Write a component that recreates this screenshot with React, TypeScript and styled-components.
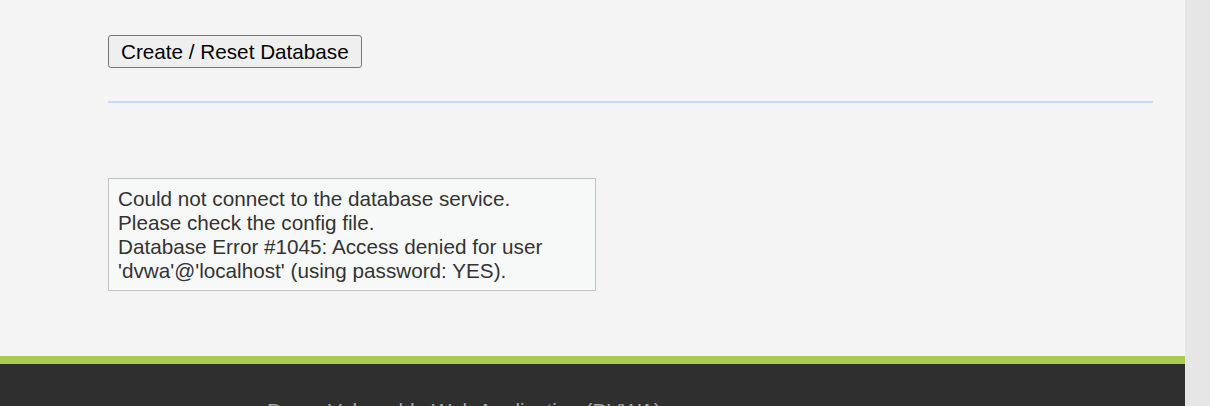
import React from "react";
import styled, { createGlobalStyle } from "styled-components";

const GlobalStyle = createGlobalStyle`
  html, body {
    margin: 0;
    padding: 0;
    height: 406px;
    overflow: hidden;
    font-family: "Liberation Sans", Arial, sans-serif;
  }
`;

const Frame = styled.div`
  display: flex;
  width: 1210px;
  height: 406px;
  overflow: hidden;
`;

const Page = styled.div`
  flex: 1;
  display: flex;
  flex-direction: column;
  background: #f4f4f4;
  overflow: hidden;
`;

const Gutter = styled.div`
  width: 25px;
  flex-shrink: 0;
  background: #e6e6e6;
`;

const Body = styled.main`
  flex-shrink: 0;
  height: 356px;
  box-sizing: border-box;
  padding: 35px 32px 0 108px;
  display: flex;
  flex-direction: column;
  align-items: flex-start;
`;

const Button = styled.button`
  box-sizing: border-box;
  height: 33px;
  padding: 4px 12px;
  font-family: "Liberation Sans", Arial, sans-serif;
  font-size: 20.7px;
  line-height: 23px;
  color: #000;
  background: #efefef;
  border: 1px solid #767676;
  border-radius: 3px;
`;

const Rule = styled.hr`
  align-self: stretch;
  margin: 33px 0 0;
  height: 2px;
  border: none;
  background: #c8d9f8;
`;

const ErrorBox = styled.div`
  box-sizing: border-box;
  width: 488px;
  height: 113px;
  margin-top: 75px;
  padding: 8px 9px 7px;
  background: #f7f9f9;
  border: 1px solid #c3c3c3;
  color: #333;
  font-size: 20.7px;
  line-height: 24px;
`;

const Footer = styled.footer`
  flex-shrink: 0;
  height: 120px;
  background: #2f2f2f;
  border-top: 8px solid #a9cb50;
  padding: 35px 0 0 267px;
  color: #a8a8a8;
  font-size: 20.7px;
  line-height: 24px;
  white-space: nowrap;
`;

export default function App() {
  return (
    <>
      <GlobalStyle />
      <Frame>
        <Page>
          <Body>
            <Button type="button">Create / Reset Database</Button>
            <Rule />
            <ErrorBox>
              Could not connect to the database service.
              <br />
              Please check the config file.
              <br />
              Database Error #1045: Access denied for user 'dvwa'@'localhost'
              (using password: YES).
            </ErrorBox>
          </Body>
          <Footer>Damn Vulnerable Web Application (DVWA)</Footer>
        </Page>
        <Gutter />
      </Frame>
    </>
  );
}
